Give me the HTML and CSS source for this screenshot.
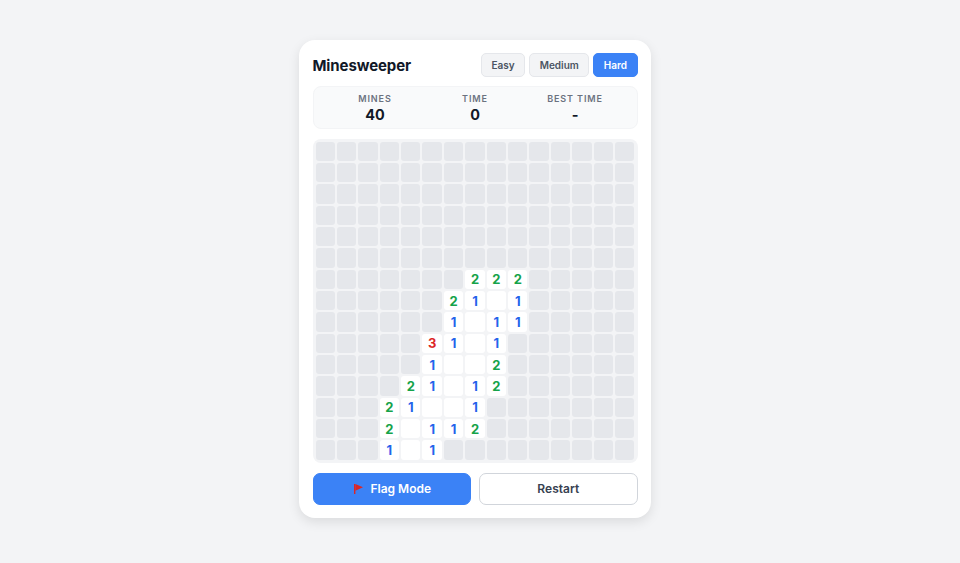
FILE: index.html
```html
<!DOCTYPE html>
<html lang="en">
<head>
    <meta charset="UTF-8">
    <meta name="viewport" content="width=device-width, initial-scale=1.0">
    <title>Minesweeper</title>
    <link rel="stylesheet" href="styles.css">
</head>
<body>
    <div class="card">
        <div class="header">
            <h1 class="title">Minesweeper</h1>
            <div class="levels">
                <button class="level">Easy</button>
                <button class="level">Medium</button>
                <button class="level active">Hard</button>
            </div>
        </div>
        <div class="stats">
            <div class="stat">
                <div class="stat-label">Mines</div>
                <div class="stat-value">40</div>
            </div>
            <div class="stat">
                <div class="stat-label">Time</div>
                <div class="stat-value">0</div>
            </div>
            <div class="stat">
                <div class="stat-label">Best Time</div>
                <div class="stat-value">-</div>
            </div>
        </div>
        <div class="board" id="board"></div>
        <div class="actions">
            <button class="action flag">
                <svg class="flag-icon" viewBox="0 0 9 10" width="9" height="10">
                    <rect x="0" y="0" width="1.4" height="10" fill="#dc2626"></rect>
                    <path d="M1.4 0 L9 3.3 L1.4 6.8 Z" fill="#dc2626"></path>
                </svg>
                Flag Mode
            </button>
            <button class="action restart">Restart</button>
        </div>
    </div>

    <script src="script.js"></script>
</body>
</html>
```

FILE: styles.css
```css
* {
    box-sizing: border-box;
}
body {
    display: flex;
    justify-content: center;
    align-items: flex-start;
    margin: 0;
    padding: 40px 10px 0 0;
    min-height: 100vh;
    background-color: #f3f4f6;
    font-family: Inter, "Liberation Sans", sans-serif;
}
.card {
    width: 352px;
    padding: 13px 13.5px;
    background-color: #fff;
    border-radius: 16px;
    box-shadow: 0 4px 12px rgba(0, 0, 0, 0.1);
}
.header {
    display: flex;
    justify-content: space-between;
    align-items: center;
    margin-bottom: 9px;
}
.title {
    margin: 0;
    font-size: 15px;
    font-weight: 700;
    letter-spacing: -0.1px;
    color: #111827;
}
.levels {
    display: flex;
    gap: 4px;
}
.level {
    height: 24px;
    padding: 0 9.5px;
    font-family: inherit;
    font-size: 10px;
    font-weight: 600;
    color: #4b5563;
    background-color: #f3f4f6;
    border: 1px solid #e5e7eb;
    border-radius: 5px;
}
.level.active {
    color: #fff;
    background-color: #3b82f6;
    border-color: #3b82f6;
}
.stats {
    display: grid;
    grid-template-columns: repeat(3, 100px);
    justify-content: center;
    height: 43px;
    padding-top: 6px;
    margin-bottom: 9.5px;
    background-color: #f9fafb;
    border: 1px solid #f3f4f6;
    border-radius: 8px;
    text-align: center;
}
.stat-label {
    font-size: 9px;
    font-weight: 600;
    line-height: 12px;
    letter-spacing: 0.9px;
    text-transform: uppercase;
    color: #6b7280;
}
.stat-value {
    font-size: 14.4px;
    font-weight: 700;
    line-height: 19px;
    color: #111827;
}
.board {
    display: grid;
    grid-template-columns: repeat(15, 1fr);
    grid-auto-rows: 19.35px;
    gap: 2px;
    padding: 3px;
    margin-bottom: 10.25px;
    background-color: #f3f4f6;
    border-radius: 8px;
}
.cell {
    display: flex;
    justify-content: center;
    align-items: center;
    font-size: 13px;
    font-weight: 700;
    background-color: #e5e7eb;
    border-radius: 3px;
}
.cell.open {
    background-color: #fff;
}
.n1 {
    color: #2563eb;
}
.n2 {
    color: #16a34a;
}
.n3 {
    color: #dc2626;
}
.actions {
    display: grid;
    grid-template-columns: 1fr 1fr;
    gap: 8px;
}
.action {
    height: 32px;
    font-family: inherit;
    font-size: 12px;
    font-weight: 600;
    border-radius: 7px;
}
.flag {
    display: flex;
    justify-content: center;
    align-items: center;
    gap: 7px;
    padding-left: 8px;
    color: #fff;
    background-color: #3b82f6;
    border: 1px solid #3b82f6;
}
.restart {
    color: #374151;
    background-color: #fff;
    border: 1px solid #d1d5db;
}
```

FILE: script.js
```js
// . = hidden, _ = opened and empty, digit = opened with a count
const rows = [
    '...............',
    '...............',
    '...............',
    '...............',
    '...............',
    '...............',
    '.......222.....',
    '......21_1.....',
    '......1_11.....',
    '.....31_1......',
    '.....1__2......',
    '....21_12......',
    '...21__1.......',
    '...2_112.......',
    '...1_1.........'
];

const board = document.getElementById('board');

rows.forEach(row => {
    row.split('').forEach(ch => {
        const cell = document.createElement('div');
        cell.className = 'cell';
        if (ch !== '.') {
            cell.classList.add('open');
        }
        if (ch !== '.' && ch !== '_') {
            cell.classList.add('n' + ch);
            cell.innerText = ch;
        }
        board.appendChild(cell);
    });
});
```
